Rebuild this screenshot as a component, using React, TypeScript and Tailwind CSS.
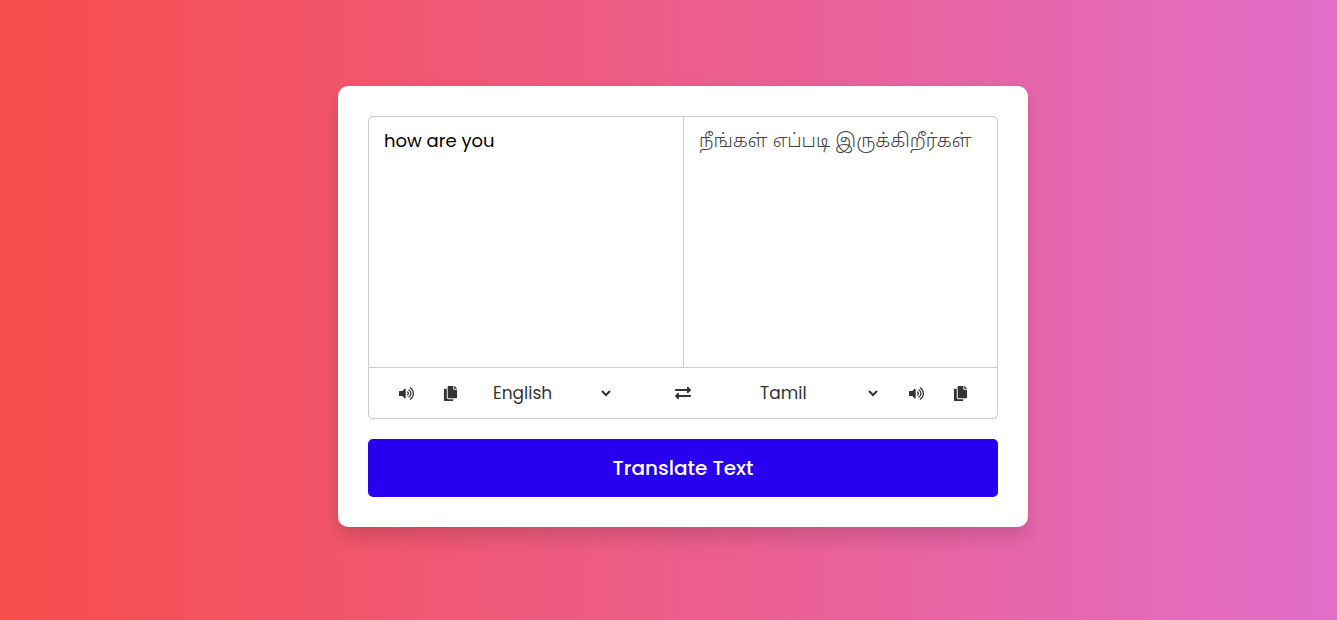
import { useState } from "react";
import { FaVolumeUp, FaCopy, FaExchangeAlt } from "react-icons/fa";

const languages = ["English", "Tamil", "Hindi", "French", "German", "Spanish"];

function IconPair({ side }: { side: string }) {
  return (
    <div className="flex items-center gap-[29px] pl-[15px] pr-3.5 text-[15px]">
      <button type="button" aria-label={`Listen to ${side} text`}>
        <FaVolumeUp />
      </button>
      <button type="button" aria-label={`Copy ${side} text`}>
        <FaCopy />
      </button>
    </div>
  );
}

interface LanguageSelectProps {
  label: string;
  value: string;
  onChange: (value: string) => void;
}

function LanguageSelect({ label, value, onChange }: LanguageSelectProps) {
  return (
    <select
      aria-label={label}
      value={value}
      onChange={(e) => onChange(e.target.value)}
      className="w-[125px] bg-transparent text-[17px] outline-none"
    >
      {languages.map((name) => (
        <option key={name}>{name}</option>
      ))}
    </select>
  );
}

export default function App() {
  const [source, setSource] = useState("how are you");
  const [from, setFrom] = useState("English");
  const [to, setTo] = useState("Tamil");

  const swap = () => {
    setFrom(to);
    setTo(from);
  };

  return (
    <main className="flex min-h-screen items-center justify-center bg-linear-to-r/srgb from-[#f74d4b] to-[#e26ec9] pb-[7px] pl-[29px] font-[Poppins,'Noto_Sans_Tamil','Noto_Sans',sans-serif]">
      <div className="w-full max-w-[690px] rounded-[10px] bg-white p-[30px] shadow-[0_10px_20px_rgba(0,0,0,0.15)]">
        <div className="rounded-[5px] border border-[#ccc]">
          <div className="grid h-[250px] grid-cols-2">
            <textarea
              aria-label="Text to translate"
              value={source}
              onChange={(e) => setSource(e.target.value)}
              className="resize-none px-[15px] py-2.5 text-[18px] leading-7 text-black outline-none"
            />
            <textarea
              aria-label="Translation"
              readOnly
              value="நீங்கள் எப்படி இருக்கிறீர்கள்"
              className="resize-none border-l border-[#ccc] px-[15px] py-2.5 text-[19px] leading-7 font-light text-[#444] outline-none"
            />
          </div>
          <div className="flex h-[51px] items-center border-t border-[#ccc] px-[15px] text-[#333]">
            <div className="flex flex-1 items-center gap-[17px]">
              <IconPair side="source" />
              <LanguageSelect label="From language" value={from} onChange={setFrom} />
            </div>
            <button type="button" aria-label="Swap languages" onClick={swap} className="text-base">
              <FaExchangeAlt />
            </button>
            <div className="flex flex-1 items-center justify-end gap-[13px]">
              <LanguageSelect label="To language" value={to} onChange={setTo} />
              <IconPair side="translated" />
            </div>
          </div>
        </div>
        <button
          type="button"
          className="mt-5 h-[58px] w-full rounded-[5px] bg-[#2700f0] text-[20px] font-medium text-white"
        >
          Translate Text
        </button>
      </div>
    </main>
  );
}
